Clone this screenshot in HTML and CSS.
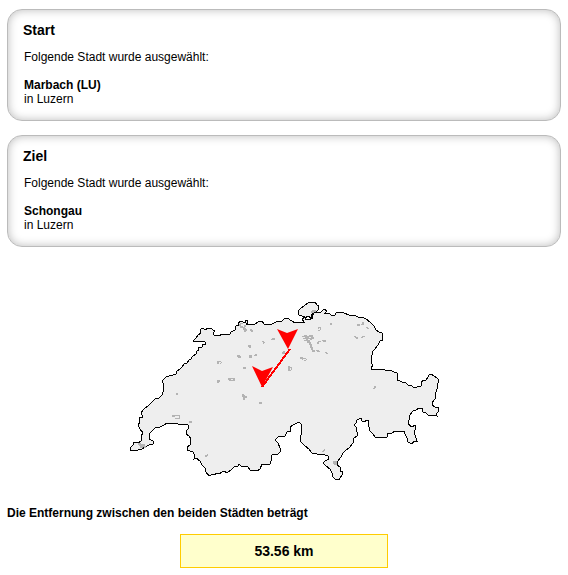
FILE: index.html
```html
<!DOCTYPE html>
<html lang="de">
<head>
<meta charset="utf-8">
<title>Entfernung</title>
<link rel="stylesheet" href="styles.css">
</head>
<body>
<main class="page">
  <section class="card">
    <h2 class="card-title">Start</h2>
    <div class="card-body">
      <p class="hint">Folgende Stadt wurde ausgewählt:</p>
      <p><strong>Marbach (LU)</strong><br>in Luzern</p>
    </div>
  </section>
  <section class="card">
    <h2 class="card-title">Ziel</h2>
    <div class="card-body">
      <p class="hint">Folgende Stadt wurde ausgewählt:</p>
      <p><strong>Schongau</strong><br>in Luzern</p>
    </div>
  </section>
  <svg class="map" viewBox="119 290 330 200" role="img" aria-label="Karte der Schweiz">
    <path class="country" d="M164 389L163 387 163 383 162 381 164 379 166 377 169 376 173 375 176 374 177 371 180 369 182 367 184 364 187 363 189 360 191 359 192 357 196 354 197 351 199 350 198 347 202 347 203 344 205 344 205 342 203 341 200 342 193 341 196 338 198 335 201 333 200 330 202 328 206 330 207 328 211 328 213 330 215 331 213 333 214 335 217 335 219 336 222 334 225 335 230 334 231 332 235 330 236 326 239 325 238 323 241 321 245 323 246 320 247 320 248 323 246 324 250 325 255 324 258 322 262 321 264 324 268 324 272 324 276 322 279 321 282 321 285 318 288 318 290 320 292 321 295 323 297 322 304 322 302 319 305 317 299 315 298 311 301 308 304 306 308 303 315 302 317 305 319 306 318 310 316 312 311 315 312 318 307 316 305 319 309 320 312 318 314 312 320 313 322 311 324 309 327 311 325 313 329 313 331 315 335 315 336 313 339 312 344 313 349 315 354 315 358 317 362 317 366 319 370 322 374 326 376 330 379 332 382 333 382 338 383 340 380 341 378 345 375 349 373 351 372 355 371 358 371 362 373 366 371 367 371 369 375 369 383 369 385 370 390 370 394 372 397 373 398 376 397 380 400 381 402 382 406 383 408 385 412 386 414 388 417 387 421 386 421 382 424 380 426 380 428 377 429 375 431 374 434 376 437 378 439 380 438 383 437 389 436 392 435 396 436 398 434 400 432 403 432 405 435 407 438 407 438 412 436 414 437 416 432 415 428 415 426 413 423 412 422 408 419 408 416 410 413 411 410 415 409 420 408 424 412 427 415 425 416 429 414 431 415 435 416 438 417 441 414 441 412 444 408 442 407 438 405 434 404 431 399 431 395 431 392 433 388 433 387 437 383 437 379 438 375 437 373 434 370 431 369 427 368 424 369 420 366 420 365 422 362 421 361 418 357 420 356 423 354 425 356 427 357 432 357 436 354 438 353 443 349 448 345 451 343 453 341 457 338 461 337 465 340 467 340 471 343 472 342 475 339 480 335 479 333 477 332 473 330 469 326 466 323 463 325 461 329 459 328 456 325 455 320 454 317 454 312 453 309 449 305 446 301 442 300 437 302 433 301 429 301 424 299 422 295 424 290 427 291 431 287 432 285 436 281 437 279 436 277 438 275 440 278 443 280 448 280 452 278 454 272 455 271 461 270 464 262 464 260 469 257 471 255 470 250 470 248 467 244 466 241 466 239 464 238 466 234 467 231 470 227 473 224 471 219 474 217 473 214 475 213 474 209 476 206 472 205 468 202 465 200 461 196 458 194 459 195 456 193 452 190 451 187 450 187 447 190 445 191 439 189 436 186 434 186 431 188 429 188 425 184 424 178 424 167 423 164 425 160 427 156 427 153 430 150 433 149 435 149 439 153 441 153 444 149 445 145 447 142 449 138 450 131 451 130 448 133 445 134 442 138 443 141 441 141 436 143 433 140 429 138 425 140 422 139 418 143 417 141 413 144 409 148 406 152 402 155 399 159 398 162 395 163 392Z"/>
    <path class="lakes" d="M217 361h4v1h1v1h-1v-1h-2v2h-2zM220 363h1v1h-1zM228 378h7v3h-2v-2h-2v1h2v1h-4v-1h-1zM217 380h3v2h-1v1h-2zM237 355h3v1h1v2h-3v-1h-1zM262 341h2v1h1v1h-2v-1h-1zM263 343h1v1h-1zM271 339h1v-1h3v2h-4zM248 345h3v3h-2v-1h-1zM249 355h3v3h-3zM254 355h1v-1h2v2h-3zM243 367h3v2h-3zM282 352h1v-1h2v3h-3zM288 366h2v1h2v3h-1v-2h-1v2h1v1h-3zM239 324h1v-1h3v1h-2v2h2v1h1v-2h2v2h-1v1h-5v-2h-1zM243 328h3v1h1v2h-1v1h-2v-2h-1zM250 329h2v1h1v2h-2v-1h-1zM302 336h2v-1h3v1h2v-1h4v2h1v2h-2v1h-2v-1h-2v1h2v2h1v2h1v3h1v3h2v2h-3v-2h-1v-2h-1v-3h-1v-2h-2v-2h-3v-1h2v-1h-3v-1h2v-1h-3zM309 337v1h2v-1zM317 342h1v-1h3v1h-2v2h-2zM322 340h4v2h-3v-1h-1zM316 350h3v1h1v1h-3v-1h-1zM325 352h2v1h1v1h-2v-1h-1zM318 327h3v3h-1v1h-2v-1h2v-2h-1v1h-1zM330 323h2v2h-2zM300 357h3v1h3v1h1v1h-1v-1h-3v1h-1v-1h-2zM304 360h2v1h-2zM312 310h4v2h-2v1h-3v-2h1zM242 394h2v1h1v1h2v2h-2v2h-2v-3h-1zM259 402h3v2h-3zM176 393h2v2h-2zM172 415h8v4h-5v-1h4v-2h-4v1h-3zM189 421h3v2h-3zM207 454h1v2h-1v1h-2v-2h2zM138 443h3v1h4v2h1v2h-2v-1h-1v1h-3v-2h-1v-1h-1zM323 450h1v-1h1v2h-1v1h-2v-1h1zM333 461h4v4h-3v-1h-1zM373 388h1v-2h2v2h-1v1h-2zM357 324h3v2h-3zM362 322h2v3h-3v-1h1zM366 327h2v1h1v1h-2v-1h-1zM354 336h2v1h2v2h-2v-1h-1v-1h-1zM361 337h1v-1h3v1h-2v1h-2z"/>
    <path class="route" d="M262 387L290 349"/>
    <path class="marker" d="M277 329L287 333 298 329 288 349ZM252 366L262 371 273 367 262 387Z"/>
  </svg>
  <p class="label">Die Entfernung zwischen den beiden Städten beträgt</p>
  <output class="result">53.56 km</output>
</main>
</body>
</html>
```
FILE: styles.css
```css
* {
  box-sizing: border-box;
}

body {
  margin: 0;
  background: #fff;
  color: #000;
  font: 12px/14px "Liberation Sans", Arial, sans-serif;
}

.page {
  display: flex;
  flex-direction: column;
  padding: 9px 7px 7px;
}

.card {
  margin-bottom: 14px;
  padding: 12px 15px 14px;
  border: 1px solid #bbb;
  border-radius: 15px;
  box-shadow: inset 0 0 10px #bbb;
}

.card-title {
  margin: 0 0 11px;
  font-size: 14px;
  line-height: 17px;
}

.card-body {
  padding-left: 1px;
}

p {
  margin: 0;
}

.hint {
  margin-bottom: 14px;
}

.map {
  align-self: center;
  width: 330px;
  max-width: 100%;
  margin: 29px 0 16px;
}

.country {
  fill: #eee;
  stroke: #000;
  shape-rendering: crispEdges;
}

.lakes {
  fill: #b3b3b3;
  fill-rule: evenodd;
  shape-rendering: crispEdges;
}

.route {
  stroke: #f00;
  stroke-width: 2;
  shape-rendering: crispEdges;
}

.marker {
  fill: #f00;
}

.label {
  font-weight: bold;
}

.result {
  align-self: center;
  width: 208px;
  margin-top: 14px;
  padding: 8px;
  border: 1px solid #fc0;
  background: #ffc;
  font-size: 14px;
  font-weight: bold;
  line-height: 16px;
  text-align: center;
}
```
